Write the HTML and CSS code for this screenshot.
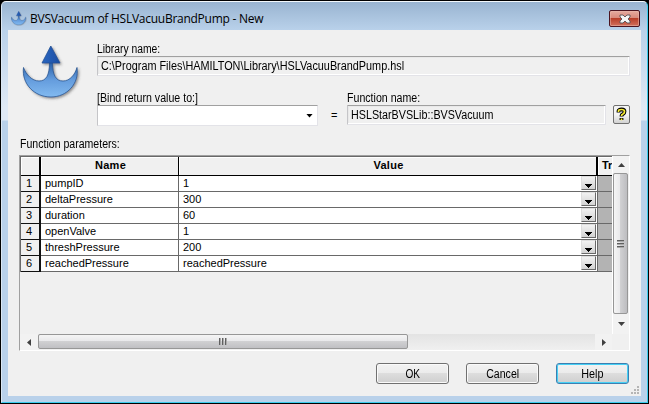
FILE: index.html
```html
<!DOCTYPE html>
<html lang="en">
<head>
<meta charset="utf-8">
<title>BVSVacuum of HSLVacuuBrandPump - New</title>
<link rel="stylesheet" href="styles.css">
</head>
<body>
<svg width="0" height="0" class="defs">
  <defs>
    <linearGradient id="body" x1="0" y1="0" x2="0" y2="1"><stop offset="0" stop-color="#285ea8"/><stop offset=".5" stop-color="#649cdd"/><stop offset="1" stop-color="#82baf0"/></linearGradient>
    <linearGradient id="tip" x1="0" y1="0" x2="1" y2="0"><stop offset="0" stop-color="#2a67c1"/><stop offset="1" stop-color="#1c4da2"/></linearGradient>
    <filter id="shadow" x="-20%" y="-20%" width="150%" height="150%"><feDropShadow dx="1.4" dy="1.4" stdDeviation="1.1" flood-color="#444" flood-opacity=".55"/></filter>
    <symbol id="anchor" viewBox="0 0 60 56">
      <g filter="url(#shadow)" stroke="#2a5590" stroke-width=".8">
        <path fill="url(#body)" d="M1.500 22C4 29 10 35.500 17 35.500C24 35.500 27.500 30 27.500 17H30.500C30.500 30 34 35.500 41 35.500C48 35.500 53 29 55 22C57.500 38 45 51.500 29 51.500C12 51.500 -.5 38 1.500 22Z"/>
        <path fill="url(#tip)" stroke="#214f95" d="M28.800 .5L38 17.500H20Z"/>
      </g>
    </symbol>
  </defs>
</svg>
<div class="window">
  <header class="titlebar">
    <svg class="app-icon"><use href="#anchor"/></svg>
    <span class="title">BVSVacuum of HSLVacuuBrandPump - New</span>
    <button class="close"><svg width="12" height="10" viewBox="0 0 12 10"><path d="M1 1h3l2 2 2-2h3v2L9 5l2 2v2H8L6 7 4 9H1V7l2-2-2-2z" fill="#f5f5f5" stroke="#565056" stroke-width=".9"/></svg></button>
  </header>
  <main class="client">
    <section class="top">
      <svg class="logo"><use href="#anchor"/></svg>
      <div class="fields">
        <div class="label"><span class="t t-lib">Library name:</span></div>
        <div class="field"><span class="t t-path">C:\Program Files\HAMILTON\Library\HSLVacuuBrandPump.hsl</span></div>
        <div class="bind">
          <div class="combo-wrap">
            <div class="label"><span class="t t-bind">[Bind return value to:]</span></div>
            <div class="combo"><i class="down"></i></div>
          </div>
          <span class="equals">=</span>
          <div class="func">
            <div class="label"><span class="t t-func">Function name:</span></div>
            <div class="field"><span class="t t-fname">HSLStarBVSLib::BVSVacuum</span></div>
          </div>
          <button class="what"><svg width="11" height="15" viewBox="0 0 11 15"><path d="M2.500 5.500V4Q2.500 2.500 5.500 2.500Q8.500 2.500 8.500 4.500Q8.500 6.300 7 7Q5.500 7.600 5.500 9.500M5.500 11V13" fill="none" stroke="#000" stroke-width="3.800"/><path d="M2.500 5V4Q2.500 2.500 5.500 2.500Q8.500 2.500 8.500 4.500Q8.500 6.300 7 7Q5.500 7.600 5.500 9M5.500 11.500V13.300" fill="none" stroke="#f7ed32" stroke-width="1.700"/></svg></button>
        </div>
      </div>
    </section>
    <div class="params"><span class="t t-params">Function parameters:</span></div>
    <section class="gridbox">
      <div class="pane">
        <div class="row head"><b class="num"></b><b class="name">Name</b><b class="value">Value</b><b class="trace">Tr</b></div>
        <div class="row"><span class="num">1</span><span class="name">pumpID</span><span class="value">1<i class="drop"></i></span><span class="trace"></span></div>
        <div class="row"><span class="num">2</span><span class="name">deltaPressure</span><span class="value">300<i class="drop"></i></span><span class="trace"></span></div>
        <div class="row"><span class="num">3</span><span class="name">duration</span><span class="value">60<i class="drop"></i></span><span class="trace"></span></div>
        <div class="row"><span class="num">4</span><span class="name">openValve</span><span class="value">1<i class="drop"></i></span><span class="trace"></span></div>
        <div class="row"><span class="num">5</span><span class="name">threshPressure</span><span class="value">200<i class="drop"></i></span><span class="trace"></span></div>
        <div class="row"><span class="num">6</span><span class="name">reachedPressure</span><span class="value">reachedPressure<i class="drop"></i></span><span class="trace"></span></div>
      </div>
      <div class="vscroll">
        <div class="arrow"><svg width="7" height="4"><path d="M3.500 0L7 4H0z"/></svg></div>
        <div class="vthumb"><i></i><i></i><i></i></div>
        <div class="arrow"><svg width="7" height="4"><path d="M0 0H7L3.500 4z"/></svg></div>
      </div>
      <div class="hscroll">
        <div class="arrow"><svg width="4" height="7"><path d="M4 0V7L0 3.500z"/></svg></div>
        <div class="hthumb"><i></i><i></i><i></i></div>
        <div class="arrow end"><svg width="4" height="7"><path d="M0 0V7L4 3.500z"/></svg></div>
      </div>
      <div class="corner"></div>
    </section>
    <footer class="buttons">
      <button class="btn"><span class="t t-ok">OK</span></button>
      <button class="btn"><span class="t t-cancel">Cancel</span></button>
      <button class="btn default"><span class="t t-help">Help</span></button>
    </footer>
    <svg class="grip" width="8" height="8" fill="#b5b5b5"><path d="M6 0h2v2H6zM3 3h2v2H3zM6 3h2v2H6zM0 6h2v2H0zM3 6h2v2H3zM6 6h2v2H6z"/></svg>
  </main>
</div>
</body>
</html>
```
FILE: styles.css
```css
* { box-sizing: border-box; }
body { margin: 0; width: 649px; height: 404px; overflow: hidden; background: #000; font-family: "Liberation Sans", Arial, sans-serif; font-size: 12px; color: #000; }
button { padding: 0; margin: 0; font: inherit; color: inherit; }
.defs { position: absolute; }
.window { width: 647px; height: 402px; margin: 1px 0 0 1px; border: 1px solid; border-color: #f3f8fc #3ccbed #3ccbed #dbe7f3; border-radius: 5px 5px 0 0; background: linear-gradient(#99b4d1 0, #b9d1ea 28px, #dfe9f5 105px, #dfe9f5 118px, #b9d1ea 119px); padding: 0 6px 6px; }
.titlebar { height: 28px; display: flex; align-items: flex-start; padding: 8px 1px 0 3px; }
.app-icon { width: 16px; height: 15px; margin-top: 1px; }
.title { font: 12px/16px "Open Sans", "Noto Sans", sans-serif; white-space: nowrap; margin: 1px 0 0 3px; flex: 1; letter-spacing: -.26px; }
.close { width: 31px; height: 17px; border: 1px solid #4b1420; border-radius: 2px; background: linear-gradient(#e5aa9f 0, #d98b7d 45%, #b73c27 48%, #d2705c 100%); box-shadow: inset 0 0 0 1px #e8b8ad88; display: flex; align-items: center; justify-content: center; }
.client { height: 366px; background: #f0f0f0; position: relative; padding: 13px 11px 0 11px; }
.top { display: flex; height: 94px; }
.logo { width: 60px; height: 57px; margin: 2px 15px 0 3px; flex: none; }
.fields { width: 533px; flex: none; }
.t { display: inline-block; white-space: nowrap; transform-origin: 0 50%; }
.label { height: 13px; line-height: 12px; }
.field { height: 20px; line-height: 19px; border: 1px solid; border-color: #a0a0a0 #e3e3e8 #e3e3e8 #c5c5c8; box-shadow: inset -1px -1px #fff, inset 1px 1px #e9e9e9; padding-left: 3px; border-radius: 1px; }
.bind { display: flex; margin-top: 16px; }
.combo-wrap { width: 221px; }
.combo { height: 21px; background: #fff; border: 1px solid; border-color: #a0a0a0 #e3e3e8 #e3e3e8 #c5c5c8; display: flex; align-items: center; justify-content: flex-end; padding-right: 4px; }
.down { width: 7px; height: 4px; background: #000; clip-path: polygon(0 0, 100% 0, 50% 100%); }
.equals { width: 29px; padding: 16px 0 0 13px; line-height: 14px; font-size: 11px; }
.func { width: 259px; }
.what { width: 17px; height: 19px; margin: 13px 0 0 7px; border: 1px solid #707070; border-radius: 2px; background: linear-gradient(#f4f4f4 50%, #d2d2d2); display: flex; align-items: center; justify-content: center; }
.t-lib { transform: scaleX(.86); }
.t-path { transform: scaleX(.904); }
.t-bind { transform: scaleX(.885); }
.t-func { transform: scaleX(.885); }
.t-fname { transform: scaleX(.895); }
.t-params { transform: scaleX(.88); }
.params { height: 18px; line-height: 14px; padding-left: 1px; }
.gridbox { width: 611px; height: 196px; border: 1px solid; border-color: #a0a0a0 #fff #fff #a0a0a0; display: grid; grid-template-columns: 592px 17px; grid-template-rows: 178px 16px; }
.pane { overflow: hidden; border-top: 1px solid #696969; font-size: 11px; }
.row { display: grid; grid-template-columns: 20px 138px 419px 40px; height: 16px; width: 618px; line-height: 14px; border-left: 1px solid #696969; }
.row > * { border-right: 1px solid #696969; border-bottom: 1px solid #696969; background: #fff; padding-left: 4px; overflow: hidden; }
.row > .num { background: #f0f0f0; border-right: 2px solid #111; border-bottom-color: #111; padding-left: 5px; }
.row > .value { display: flex; justify-content: space-between; padding-right: 1px; }
.row > .trace { background: #b3b3b3; }
.head { height: 19px; line-height: 17px; text-align: center; }
.row.head > * { background: #f0f0f0; border-right: 1px solid #000; border-bottom: 1px solid #000; box-shadow: inset 1px 1px #fff; padding: 0; }
.row.head > .num { border-right-width: 2px; }
.row.head > .name, .row.head > .value { letter-spacing: .3px; padding-left: 2px; }
.row.head > .value { justify-content: center; border-right-width: 2px; }
.row.head > .trace { text-align: left; padding-left: 4px; }
.drop { width: 15px; height: 14px; flex: none; border: 1px solid; border-color: #ddd #696969 #696969 #ddd; background: linear-gradient(#000, #000) 3px 7px / 7px 1px no-repeat, linear-gradient(#000, #000) 4px 8px / 5px 1px no-repeat, linear-gradient(#000, #000) 5px 9px / 3px 1px no-repeat, linear-gradient(#000, #000) 6px 10px / 1px 1px no-repeat, linear-gradient(#f1f1f1, #d3d3d3); }
.vscroll { display: flex; flex-direction: column; background: linear-gradient(90deg, #e3e3e3, #f0f0f0); border-left: 1px solid #fff; }
.arrow { display: flex; align-items: center; justify-content: center; fill: #404040; background: #f2f2f2; }
.vscroll .arrow { height: 17px; flex: none; }
.vscroll .arrow:last-child { height: 20px; }
.vthumb { height: 141px; width: 15px; border: 1px solid #979797; border-radius: 2px; background: linear-gradient(90deg, #f5f5f5, #e9e9eb 45%, #d0d0d2 50%, #bdbdc0); display: flex; flex-direction: column; align-items: center; justify-content: center; gap: 1px; }
.vthumb i { width: 7px; height: 2px; background: linear-gradient(#606060 50%, #aaa 50%); }
.hscroll { display: flex; background: linear-gradient(#e3e3e3, #f0f0f0); }
.hscroll .arrow { width: 18px; flex: none; }
.hscroll .end { margin-left: auto; width: 17px; }
.hthumb { width: 370px; height: 15px; border: 1px solid #979797; border-radius: 2px; background: linear-gradient(#f5f5f5, #e9e9eb 45%, #d0d0d2 50%, #c0c0c3); display: flex; align-items: center; justify-content: center; gap: 1px; }
.hthumb i { width: 2px; height: 7px; background: linear-gradient(90deg, #606060 50%, #aaa 50%); }
.corner { background: #f0f0f0; }
.buttons { display: flex; justify-content: flex-end; gap: 17px; margin-top: 12px; padding-right: 1px; }
.btn { width: 73px; height: 21px; border: 1px solid #707070; border-radius: 3px; background: linear-gradient(#f2f2f2 0, #ebebeb 50%, #dddddd 50%, #cfcfcf); box-shadow: inset 0 0 0 1px #fafafa; line-height: 18px; }
.btn .t { transform-origin: 50% 50%; }
.default { border-color: #3c7fb1; box-shadow: inset 0 0 0 1px #46d0f5; }
.t-ok { transform: scaleX(.84); }
.t-cancel { transform: scaleX(.88); }
.t-help { transform: scaleX(.9); }
.grip { position: absolute; right: 2px; bottom: 2px; }
```
